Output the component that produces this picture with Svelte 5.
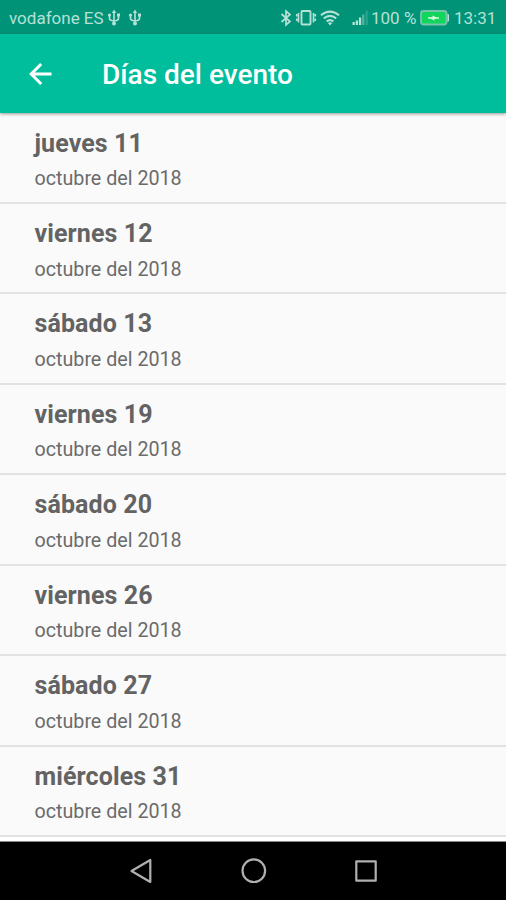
<script>
  const days = [
    'jueves 11',
    'viernes 12',
    'sábado 13',
    'viernes 19',
    'sábado 20',
    'viernes 26',
    'sábado 27',
    'miércoles 31'
  ];
  const month = 'octubre del 2018';
</script>

{#snippet usb()}
  <svg class="usb" width="14" height="18" viewBox="0 0 14 18" fill="none" stroke="currentColor" stroke-width="1.6">
    <path d="M7 3v12M2.500 6v3.500q0 2 4.500 2.500M11.500 6v3.500q0 2-4.500 2.500" />
    <path d="M7 .5 4.800 4h4.400z" fill="currentColor" stroke="none" />
    <circle cx="2.500" cy="6" r="1.600" fill="currentColor" stroke="none" />
    <path d="M10 4.500h3v3h-3z" fill="currentColor" stroke="none" />
    <circle cx="7" cy="14.500" r="2" fill="currentColor" stroke="none" />
  </svg>
{/snippet}

<div class="screen">
  <div class="status">
    <span class="carrier">vodafone ES</span>
    {@render usb()}
    {@render usb()}
    <div class="indicators">
      <svg width="12" height="18" viewBox="0 0 12 18" fill="none" stroke="currentColor" stroke-width="1.700">
        <path d="M1.500 5 10 12.500 6 16V2l4 3.500L1.500 13" />
      </svg>
      <svg class="vibrate" width="22" height="18" viewBox="0 0 22 18" fill="none" stroke="currentColor" stroke-width="1.900">
        <rect x="6.500" y="2" width="9" height="13.500" rx="1" />
        <path d="M3.500 4v9.500M18.500 4v9.500M1.700 5v2.500M1.700 9.500v2.500M20.300 5v2.500M20.300 9.500v2.500" stroke-width="1.600" />
      </svg>
      <svg class="wifi" width="20" height="18" viewBox="0 0 20 18" fill="none" stroke="currentColor" stroke-width="2">
        <path d="M.9 6.200q9.100-7.200 18.200 0M3.800 9.400q6.200-5 12.400 0M6.600 12.400q3.400-2.600 6.800 0" />
        <path d="M7.800 14q2.200-1.500 4.400 0L10 16.600z" fill="currentColor" stroke="none" />
      </svg>
      <svg class="signal" width="17" height="18" viewBox="0 0 17 18" fill="currentColor">
        <path d="M.5 13h2.300v3H.5zM3.700 11.500H6V16H3.700zM6.900 8.500h2.300V16H6.900z" />
        <path d="M10.100 5.500h2.300V16h-2.300z" opacity=".45" />
        <path d="M13.500 1.500h2.300V16h-2.300z" opacity=".22" />
      </svg>
      <span class="percent">100 %</span>
      <svg class="battery" width="30" height="18" viewBox="0 0 30 18">
        <rect x="1" y="2" width="25.500" height="13.500" rx="2.500" fill="#12d65b" stroke="#75c5ad" stroke-width="1.900" />
        <path d="M27.500 4.800q1.500 0 1.500 1.500v4.900q0 1.500-1.500 1.500z" fill="#b5e1d6" />
        <path d="M8 8.200h4.500V6.500L15.500 8 19 8.500v1.200h-4.500v1.800L11.500 10 8 9.600z" fill="#ddffe6" />
      </svg>
      <span class="clock">13:31</span>
    </div>
  </div>

  <header>
    <svg width="24" height="24" viewBox="0 0 24 24" fill="none" stroke="#fff" stroke-width="3">
      <path d="M23.500 12H4M13.200 2 3.200 12l10 10" />
    </svg>
    <h1>Días del evento</h1>
  </header>

  <main>
    {#each days as day}
      <article>
        <h2>{day}</h2>
        <p>{month}</p>
      </article>
    {/each}
  </main>

  <nav>
    <svg width="24" height="26" viewBox="0 0 24 26"><path d="M21.300 2v22L2.500 13z" /></svg>
    <svg width="26" height="26" viewBox="0 0 26 26"><circle cx="12.800" cy="12.700" r="11.300" /></svg>
    <svg width="22" height="26" viewBox="0 0 22 26"><rect x="1.300" y="3.300" width="19.400" height="19.400" /></svg>
  </nav>
</div>

<style>
  :global(body) { margin: 0; background: #fafafa; font-family: Roboto, sans-serif; }
  svg { display: block; flex: none; }
  .screen { display: flex; flex-direction: column; width: 506px; height: 900px; overflow: hidden; }
  .status {
    display: flex; align-items: center; flex: none; box-sizing: border-box;
    height: 34px; padding: 1px 10px 0 9px;
    background: #009378; color: #b5e1d6; font-size: 17px; line-height: 20px; white-space: nowrap;
  }
  .carrier { width: 98px; }
  .usb { margin-right: 7px; }
  .indicators { display: flex; align-items: center; margin-left: auto; }
  .vibrate { margin-left: 3px; }
  .wifi { margin-left: 3px; }
  .signal { margin-left: 12px; }
  .percent { width: 48px; margin-left: 2px; }
  .battery { margin-left: 1px; }
  .clock { width: 42px; margin-left: 4px; }
  header {
    display: flex; align-items: center; flex: none; box-sizing: border-box;
    height: 79px; padding: 1px 0 0 28px;
    background: #00bd9c; color: #fff; box-shadow: 0 1px 3px rgba(0, 0, 0, .4); z-index: 1;
  }
  h1 { margin: 2px 0 0 50px; font-size: 28px; font-weight: 500; line-height: 34px; }
  main { flex: 1; min-height: 0; background: #fff; padding-top: .4px; }
  article {
    box-sizing: border-box; height: 90.460px; padding: 14.200px 34px 0 34.500px;
    border-bottom: 2px solid #e2e2e2; background: #fafafa; color: #636363;
  }
  h2 { margin: 0; font-size: 25px; font-weight: 700; line-height: 32px; letter-spacing: .1px; }
  p { margin: 7.500px 0 0; font-size: 19.700px; line-height: 24px; color: #6b6b6b; }
  nav {
    display: flex; align-items: center; flex: none; box-sizing: border-box;
    height: 59px; padding: 0 129px; justify-content: space-between;
    background: #000; border-top: 1px solid #8a8a8a;
  }
  nav svg { fill: none; stroke: #b0b0b0; stroke-width: 2.200; stroke-linejoin: round; }
</style>
